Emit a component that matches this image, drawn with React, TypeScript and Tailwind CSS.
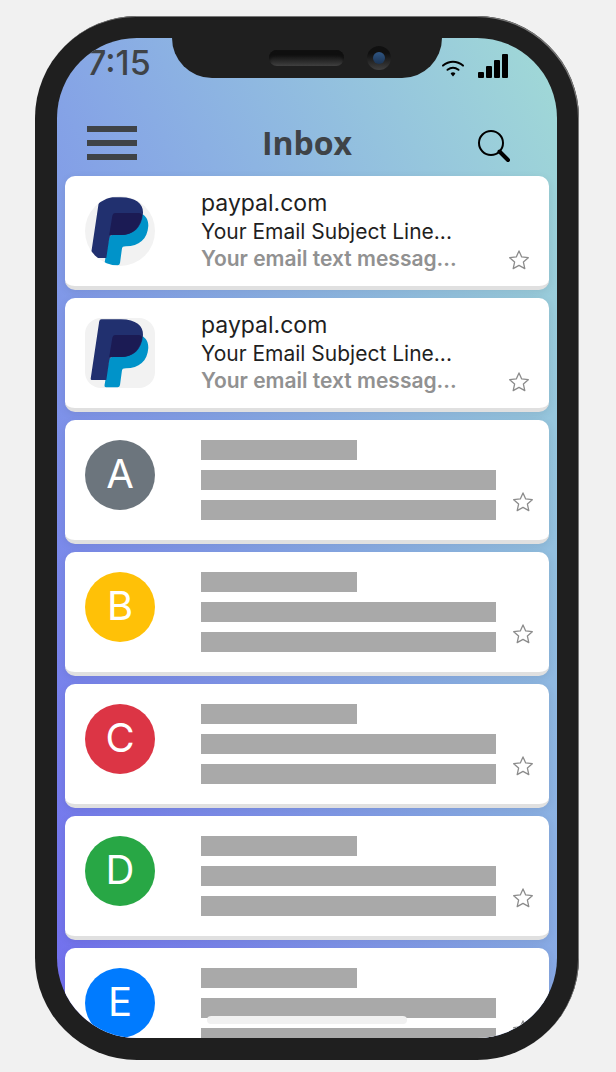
import { useId } from "react";

function Star() {
  return (
    <svg viewBox="0 0 22 22" className="size-[22px]" fill="none" stroke="#8c8c8c" strokeWidth="1.3" strokeLinejoin="round" aria-hidden="true">
      <path d="M11 1.9 13.7 7.9 20.3 8.7 15.4 13.1 16.8 19.6 11 16.4 5.2 19.6 6.6 13.1 1.7 8.7 8.3 7.9Z" />
    </svg>
  );
}

function PaypalLogo({ shape }: { shape: string }) {
  return (
    <svg viewBox="0 0 70 70" className={`size-[70px] shrink-0 bg-[#f2f2f2] ${shape}`} role="img" aria-label="PayPal">
      <path fill="#0093c9" d="M24 41 34 34 48 28 57 18C61 20 63.5 24 63.3 30C62.5 43 54 50.3 41 50.3C38 50.3 37.2 51 36.9 53L35 67Q34.6 69.2 32.6 69.2H21Q19.2 69.2 19.5 67.2Z" />
      <path fill="#21306f" d="M16.5 1.2H36C51 1.2 58.5 8 58 17C57 32 48 39 36 39H28Q24.8 39 24.3 42L21.3 62H7Q5.4 62 5.7 60.4L14.2 3.4Q14.5 1.2 16.5 1.2Z" />
      <path fill="#1b1b54" d="M30 17H54Q56 17 57.2 19C55 33 47 39 36 39H24.2L27.4 19.5Q27.8 17 30 17Z" />
    </svg>
  );
}

function StarButton({ label }: { label: string }) {
  return (
    <button type="button" aria-label={label} className="block">
      <Star />
    </button>
  );
}

function MessageCard({ shape }: { shape: string }) {
  return (
    <li className="flex items-start rounded-[10px] border-b-4 border-[#e0e0e0] bg-white pt-5 pr-[19px] pl-5 shadow-[0_2px_8px_rgba(0,0,0,0.08)]">
      <PaypalLogo shape={shape} />
      <div className="-mt-2 ml-[46px] min-w-0 flex-1 pb-3.5 text-[#1f1f1f]">
        <h2 className="text-[23px] leading-[30px]">paypal.com</h2>
        <p className="text-[21px] leading-[27px]">Your Email Subject Line...</p>
        <p className="text-[21px] leading-[27px] font-semibold text-[#919191]">Your email text messag...</p>
      </div>
      <div className="self-end pb-[15px]">
        <StarButton label="Star message" />
      </div>
    </li>
  );
}

function PlaceholderCard({ letter, color }: { letter: string; color: string }) {
  return (
    <li className="flex items-start rounded-[10px] border-b-4 border-[#e0e0e0] bg-white pt-5 pr-[15px] pl-5 shadow-[0_2px_8px_rgba(0,0,0,0.08)]">
      <span className={`flex size-[70px] shrink-0 items-center justify-center rounded-full pb-0.5 text-[40px] leading-none text-white ${color}`}>
        {letter}
      </span>
      <div className="ml-[46px] flex flex-1 flex-col gap-2.5 pb-5">
        <div className="h-5 w-[53%] bg-[#a9a9a9]" />
        <div className="h-5 bg-[#a9a9a9]" />
        <div className="h-5 bg-[#a9a9a9]" />
      </div>
      <div className="ml-4 self-end pb-[27px]">
        <StarButton label={`Star message from ${letter}`} />
      </div>
    </li>
  );
}

function StatusIcons() {
  return (
    <div className="flex items-end gap-[13px]">
      <svg viewBox="0 0 24 18" className="h-[18px] w-6" fill="none" stroke="#000" strokeWidth="2" strokeLinecap="round" aria-hidden="true">
        <path d="M2 5.6C8 .5 16 .5 22 5.6" />
        <path d="M6.5 9.8Q12 5.8 17.5 9.8" />
        <path d="M12 12.2C13.5 12.2 14.3 13 14.3 13.7L12 16.4 9.7 13.7C9.7 13 10.5 12.2 12 12.2Z" fill="#000" stroke="none" />
      </svg>
      <svg viewBox="0 0 30 24" className="h-6 w-[30px]" aria-hidden="true">
        <rect x="0" y="18" width="6" height="6" rx="1" />
        <rect x="8" y="12" width="6" height="12" rx="1" />
        <rect x="16" y="6" width="6" height="18" rx="1" />
        <rect x="24" y="0" width="6" height="24" rx="1" />
      </svg>
    </div>
  );
}

const placeholders = [
  { letter: "A", color: "bg-[#6c757d]" },
  { letter: "B", color: "bg-[#ffc107]" },
  { letter: "C", color: "bg-[#dc3545]" },
  { letter: "D", color: "bg-[#28a745]" },
  { letter: "E", color: "bg-[#007bff]" },
];

export default function App() {
  const titleId = useId();
  return (
    <main className="flex min-h-screen items-start justify-center bg-[#f1f1f1] pt-4 pr-0.5 font-['Inter',sans-serif]">
      <div className="w-full max-w-[544px] rounded-[102px] bg-[#1f1f1f] p-[22px] shadow-[inset_-1px_1px_0_#777777]">
        <section aria-labelledby={titleId} className="relative h-[1000px] overflow-hidden rounded-[80px] bg-linear-to-tr from-[#716cee] to-[#a1dad6]">
          <div className="absolute top-0 left-1/2 flex h-10 w-[270px] -translate-x-1/2 items-center justify-end gap-[23px] rounded-b-[40px] bg-[#1f1f1f] pr-[51px]">
            <div className="h-4 w-[75px] rounded-full bg-linear-to-b from-[#101010] from-30% to-[#404040] shadow-[inset_0_4px_3px_#101010]" />
            <div className="flex size-6 items-center justify-center rounded-full bg-linear-to-b from-[#101010] from-30% to-[#404040]">
              <div className="size-3 rounded-full bg-linear-to-b from-[#305683] to-[#1b3352]" />
            </div>
          </div>

          <div className="flex items-start justify-between pt-1.5 pr-[49px] pl-[30px]">
            <time className="text-[34px] leading-[38px] font-medium text-[#3f4347]">7:15</time>
            <div className="pt-2.5">
              <StatusIcons />
            </div>
          </div>

          <header className="mt-10 grid grid-cols-[1fr_auto_1fr] items-center pr-[46px] pb-3 pl-[30px]">
            <button type="button" aria-label="Menu" className="flex w-[50px] flex-col gap-2">
              <span className="h-1.5 bg-[#3f4347]" />
              <span className="h-1.5 bg-[#3f4347]" />
              <span className="h-1.5 bg-[#3f4347]" />
            </button>
            <h1 id={titleId} className="pl-4 font-['Open_Sans',sans-serif] text-[32px] leading-[42px] font-bold text-[#3f4347]">
              Inbox
            </h1>
            <button type="button" aria-label="Search" className="justify-self-end pt-1.5">
              <svg viewBox="0 0 34 34" className="size-[34px]" fill="none" stroke="#000" aria-hidden="true">
                <circle cx="14" cy="14" r="12" strokeWidth="2" />
                <path d="M22.5 22.5 31 31" strokeWidth="4" strokeLinecap="round" />
              </svg>
            </button>
          </header>

          <ul className="flex flex-col gap-2 px-2">
            <MessageCard shape="rounded-full" />
            <MessageCard shape="rounded-2xl" />
            {placeholders.map((item) => (
              <PlaceholderCard key={item.letter} letter={item.letter} color={item.color} />
            ))}
          </ul>

          <div className="absolute bottom-3.5 left-1/2 h-2 w-[200px] -translate-x-1/2 rounded-full bg-[#f1f1f1]" />
        </section>
      </div>
    </main>
  );
}
